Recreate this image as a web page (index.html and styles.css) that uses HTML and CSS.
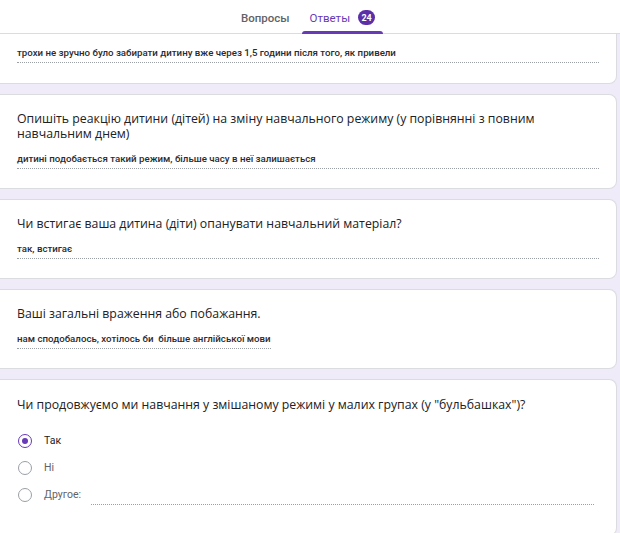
FILE: index.html
```html
<!DOCTYPE html>
<html lang="uk">
<head>
<meta charset="utf-8">
<link rel="stylesheet" href="styles.css">
</head>
<body>
<header class="tabs">
  <div class="tab">Вопросы</div>
  <div class="tab active">Ответы <span class="badge">24</span></div>
</header>
<main class="list">
  <section class="card card-first">
    <div class="answer">трохи не зручно було забирати дитину вже через 1,5 години після того, як привели</div>
  </section>
  <section class="card">
    <div class="title">Опишіть реакцію дитини (дітей) на зміну навчального режиму (у порівнянні з повним навчальним днем)</div>
    <div class="answer">дитині подобається такий режим, більше часу в неї залишається</div>
  </section>
  <section class="card">
    <div class="title">Чи встигає ваша дитина (діти) опанувати навчальний матеріал?</div>
    <div class="answer">так, встигає</div>
  </section>
  <section class="card">
    <div class="title">Ваші загальні враження або побажання.</div>
    <div class="answer short">нам сподобалось, хотілось би  більше англійської мови</div>
  </section>
  <section class="card card-last">
    <div class="title">Чи продовжуємо ми навчання у змішаному режимі у малих групах (у "бульбашках")?</div>
    <div class="options">
      <div class="option"><span class="radio checked"></span><span class="label">Так</span></div>
      <div class="option"><span class="radio"></span><span class="label">Ні</span></div>
      <div class="option"><span class="radio"></span><span class="label">Другое:</span><span class="other-line"></span></div>
    </div>
  </section>
</main>
</body>
</html>
```
FILE: styles.css
```css
html, body {
  margin: 0;
  padding: 0;
}
body {
  background: #f0ebf8;
  font-family: "Open Sans", "Liberation Sans", sans-serif;
  color: #202124;
  width: 620px;
  height: 533px;
  overflow: hidden;
}
.tabs {
  height: 34px;
  background: #ffffff;
  border-bottom: 1px solid #dadce0;
  display: flex;
  justify-content: center;
  align-items: stretch;
  gap: 4px;
  padding-right: 4px;
  box-sizing: border-box;
}
.tab {
  font-family: "Roboto", "Liberation Sans", sans-serif;
  font-size: 11.5px;
  font-weight: 500;
  color: #5f6368;
  display: flex;
  align-items: center;
  padding: 2px 8px 0;
  position: relative;
}
.tab.active {
  color: #673ab7;
  font-weight: 400;
}
.tab.active::after {
  content: "";
  position: absolute;
  left: 0;
  right: 0;
  bottom: -1px;
  height: 3px;
  background: #673ab7;
  border-radius: 3px 3px 0 0;
}
.badge {
  display: inline-flex;
  align-items: center;
  justify-content: center;
  width: 17px;
  height: 15px;
  border-radius: 8px;
  background: #5b2fa8;
  color: #fff;
  font-size: 9px;
  font-weight: 700;
  margin-left: 8px;
}
.list {
  display: flex;
  flex-direction: column;
  gap: 10px;
  padding-right: 3px;
}
.card {
  background: #ffffff;
  border: 1px solid #dadce0;
  border-left: none;
  border-radius: 0 8px 8px 0;
  padding: 16px 17px 19px 17px;
}
.card:not(.card-last) {
  display: flex;
  flex-direction: column;
}
.card-first {
  border-top: none;
  border-radius: 0 0 8px 0;
  padding-top: 12px;
  padding-bottom: 20px;
}
.card-last {
  padding-top: 17px;
  padding-bottom: 33px;
}
.title {
  font-size: 12.3px;
  line-height: 15px;
  color: #202124;
  padding-right: 50px;
}
.answer {
  font-family: "Roboto", "Liberation Sans", sans-serif;
  font-size: 9.7px;
  font-weight: 500;
  color: #2b2b2f;
  line-height: 14px;
  padding-bottom: 2px;
  border-bottom: 1px dotted #9aa0a6;
  margin-top: 11px;
  white-space: pre;
}
.card-first .answer {
  margin-top: 0;
}
.answer.short {
  align-self: flex-start;
}
.options {
  display: flex;
  flex-direction: column;
  gap: 12px;
  margin-top: 21px;
  padding-left: 1px;
}
.option {
  display: flex;
  align-items: center;
  height: 15px;
}
.radio {
  width: 12px;
  height: 12px;
  border-radius: 50%;
  border: 1.5px solid #9aa0a6;
  box-sizing: content-box;
  margin-right: 12px;
  display: flex;
  align-items: center;
  justify-content: center;
  flex: none;
}
.radio.checked {
  border-color: #673ab7;
}
.radio.checked::after {
  content: "";
  width: 6px;
  height: 6px;
  border-radius: 50%;
  background: #673ab7;
}
.label {
  font-family: "Roboto", "Liberation Sans", sans-serif;
  font-size: 10.5px;
  color: #202124;
}
.option:not(:first-child) .label {
  color: #5f6368;
}
.other-line {
  flex: 1;
  margin-left: 10px;
  margin-right: 5px;
  border-bottom: 1px dotted #9aa0a6;
  align-self: flex-end;
  margin-bottom: -3px;
}
```
